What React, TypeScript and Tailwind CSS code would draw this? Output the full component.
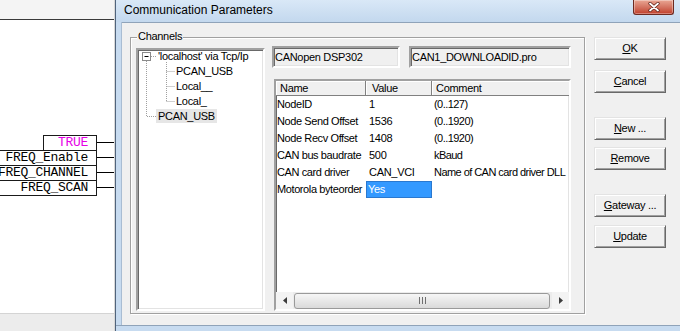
import React from "react";

const sunken =
  "border-2 border-t-[#a0a0a0] border-l-[#a0a0a0] border-b-white border-r-white shadow-[inset_1px_1px_0_#696969,inset_-1px_-1px_0_#e3e3e3]";
const raised =
  "border border-t-[#e3e3e3] border-l-[#e3e3e3] border-b-[#696969] border-r-[#696969] shadow-[inset_1px_1px_0_#fff,inset_-1px_-1px_0_#a0a0a0]";

const fbdRows = [
  { t: "TRUE", color: "text-[#e600e6]", w: "w-[54px]", last: false },
  { t: "FREQ_Enable", color: "text-black", w: "w-[100px]", last: false },
  { t: "FREQ_CHANNEL", color: "text-black", w: "w-[100px]", last: false },
  { t: "FREQ_SCAN", color: "text-black", w: "w-[100px]", last: true },
];

const props = [
  ["NodeID", "1", "(0..127)"],
  ["Node Send Offset", "1536", "(0..1920)"],
  ["Node Recv Offset", "1408", "(0..1920)"],
  ["CAN bus baudrate", "500", "kBaud"],
  ["CAN card driver", "CAN_VCI", "Name of CAN card driver DLL"],
  ["Motorola byteorder", "Yes", ""],
];

function LeftPane() {
  return (
    <div className="w-[115px] shrink-0 h-full flex flex-col bg-white border-r border-[#d8d8d8]">
      <div className="h-[20px] shrink-0 bg-[#f4f4f4] border-b border-[#3a3a3a]" />
      <div className="flex-1 pt-[115px] font-['Liberation_Mono',monospace] text-[13px]">
        {fbdRows.map((r) => (
          <div key={r.t} className="flex justify-end items-center h-[15px]">
            <div
              className={`${r.w} shrink-0 ${r.last ? "h-[16px] border-b" : "h-[15px]"} border-t border-l border-r border-[#1a1a1a] leading-[14px] text-right pr-[8px] whitespace-nowrap overflow-hidden ${r.color}`}
            >
              {r.t}
            </div>
            <div className="w-[17px] shrink-0 h-px bg-black self-start mt-[7px]" />
          </div>
        ))}
      </div>
      <div className="h-[18px] shrink-0 bg-[#ececec] border-t border-[#d4d4d4]" />
    </div>
  );
}

function CloseButton() {
  return (
    <div className="mr-[6px] w-[41px] h-[15px] rounded-b-[3px] border border-t-0 border-[#6d2a20] bg-linear-to-b from-[#e9a694] via-[#d47563] to-[#c03c28] shadow-[inset_0_0_0_1px_rgba(255,255,255,0.35)] flex items-center justify-center">
      <svg width="12" height="10" viewBox="0 0 12 10">
        <path d="M2 1.5 L10 8.5 M10 1.5 L2 8.5" stroke="#5a1d14" strokeWidth="3.2" strokeLinecap="round" />
        <path d="M2 1.5 L10 8.5 M10 1.5 L2 8.5" stroke="#ffffff" strokeWidth="1.8" strokeLinecap="round" />
      </svg>
    </div>
  );
}

function Tree() {
  return (
    <div className={`w-[129px] h-[263px] shrink-0 bg-white relative ${sunken}`}>
      <svg className="absolute left-0 top-0" width="125" height="80" viewBox="0 0 125 80">
        <g stroke="#a0a0a0" strokeWidth="1" strokeDasharray="1 1" fill="none">
          <path d="M13 6.5 H18" />
          <path d="M8.5 11 V66.5 H18" />
          <path d="M28.5 12 V51.5" />
          <path d="M28.5 21.5 H37" />
          <path d="M28.5 36.5 H37" />
          <path d="M28.5 51.5 H37" />
        </g>
        <rect x="4.5" y="2.5" width="8" height="8" fill="#fff" stroke="#8a8a8a" />
        <path d="M6.5 6.5 H10.5" stroke="#000" strokeWidth="1" />
      </svg>
      <div className="relative -mt-[1px] leading-[15px]">
        <div className="h-[15px] pl-[20px] whitespace-nowrap">'localhost' via Tcp/Ip</div>
        <div className="h-[15px] pl-[38px]">PCAN_USB</div>
        <div className="h-[15px] pl-[38px]">Local__</div>
        <div className="h-[15px] pl-[38px]">Local_</div>
        <div className="h-[15px] pl-[18px]">
          <span className="inline-block bg-[#e6e6e6] px-[2px] leading-[14px]">PCAN_USB</span>
        </div>
      </div>
    </div>
  );
}

function PropList() {
  return (
    <div className={`mt-[11px] ml-[2px] w-[297px] h-[232px] bg-white flex flex-col ${sunken}`}>
      <div className="h-[15px] shrink-0 flex bg-[#f0f0f0] leading-[14px]">
        <div className="w-[90px] border-r border-b border-[#808080] shadow-[inset_1px_1px_0_#fff] pl-[4px]">Name</div>
        <div className="w-[66px] border-r border-b border-[#808080] shadow-[inset_1px_1px_0_#fff] pl-[6px]">Value</div>
        <div className="flex-1 border-b border-[#808080] shadow-[inset_1px_1px_0_#fff] pl-[4px]">Comment</div>
      </div>
      <div className="flex-1">
        {props.map((p) => (
          <div key={p[0]} className="h-[17px] flex items-center whitespace-nowrap">
            <div className="w-[90px] pl-[1px] tracking-[-0.4px]">{p[0]}</div>
            {p[1] === "Yes" ? (
              <div className="w-[66px] h-[17px] bg-[#3399ff] border border-[#2a78cf] text-white pl-[1px] leading-[15px]">Yes</div>
            ) : (
              <div className="w-[66px] pl-[3px]">{p[1]}</div>
            )}
            <div className="flex-1 min-w-0 pl-[2px] tracking-[-0.55px]">{p[2]}</div>
          </div>
        ))}
      </div>
      <div className="h-[17px] shrink-0 flex bg-[#ececec]">
        <div className="w-[17px] flex items-center justify-center bg-[#f3f3f3]">
          <svg width="4" height="7" viewBox="0 0 4 7">
            <path d="M4 0 L0 3.5 L4 7 Z" fill="#3c3c3c" />
          </svg>
        </div>
        <div className="flex-1 flex items-center pl-[1px] pr-[1px]">
          <div className="w-[256px] h-[16px] rounded-[3px] border border-[#9a9a9a] bg-linear-to-b from-[#f6f6f6] to-[#dadada] flex items-center justify-center">
            <svg width="7" height="7" viewBox="0 0 7 7">
              <path d="M0.5 0 V7 M3.5 0 V7 M6.5 0 V7" stroke="#6f6f6f" strokeWidth="1" />
            </svg>
          </div>
        </div>
        <div className="w-[17px] flex items-center justify-center bg-[#f3f3f3]">
          <svg width="4" height="7" viewBox="0 0 4 7">
            <path d="M0 0 L4 3.5 L0 7 Z" fill="#3c3c3c" />
          </svg>
        </div>
      </div>
    </div>
  );
}

function Btn({ u, rest, mt }: { u: string; rest: string; mt: string }) {
  return (
    <div className={`${mt} w-[72px] h-[23px] bg-[#f0f0f0] flex items-center justify-center ${raised}`}>
      <span>
        <span className="underline underline-offset-[1px]">{u}</span>
        {rest}
      </span>
    </div>
  );
}

export default function App() {
  return (
    <div className="w-[680px] h-[331px] overflow-hidden flex bg-white font-['Liberation_Sans',Arial,sans-serif] text-[11px] tracking-[-0.3px] text-black">
      <LeftPane />
      <div className="flex-1 min-w-0 flex flex-col border-l border-[#50647c]">
        <div className="h-[22px] shrink-0 flex items-start bg-linear-to-b from-[#d9e8f7] to-[#c3d8ee]">
          <span className="pl-[8px] pt-[3px] text-[12px] leading-[14px] tracking-normal text-black whitespace-nowrap">
            Communication Parameters
          </span>
          <div className="flex-1" />
          <CloseButton />
        </div>
        <div className="flex-1 min-h-0 flex">
          <div className="w-[6px] shrink-0 bg-[#c7dbf0] border-r border-[#a9bdd3]" />
          <div className="flex-1 bg-[#f0f0f0] border-t border-[#8fa3b9] pl-[8px] pt-[14px] flex items-start">
            <div className="relative w-[455px] h-[277px] shrink-0 border border-[#a0a0a0] shadow-[1px_1px_0_#fff,inset_1px_1px_0_#fff] flex pl-[5px] pt-[10px]">
              <span className="absolute -top-[8px] left-[6px] px-[1px] bg-[#f0f0f0] leading-[13px]">Channels</span>
              <Tree />
              <div className="ml-[7px] -mt-[2px] w-[299px] flex flex-col">
                <div className="flex">
                  <div className={`w-[128px] h-[22px] bg-[#f0f0f0] pl-[1px] flex items-center whitespace-nowrap ${sunken}`}>
                    CANopen DSP302
                  </div>
                  <div className={`ml-[9px] w-[162px] h-[22px] bg-[#f0f0f0] pl-[1px] flex items-center whitespace-nowrap ${sunken}`}>
                    CAN1_DOWNLOADID.pro
                  </div>
                </div>
                <PropList />
              </div>
            </div>
            <div className="ml-[9px] flex flex-col">
              <Btn u="O" rest="K" mt="mt-0" />
              <Btn u="C" rest="ancel" mt="mt-[10px]" />
              <Btn u="N" rest="ew ..." mt="mt-[24px]" />
              <Btn u="R" rest="emove" mt="mt-[7px]" />
              <Btn u="G" rest="ateway ..." mt="mt-[24px]" />
              <Btn u="U" rest="pdate" mt="mt-[8px]" />
            </div>
          </div>
        </div>
        <div className="h-[6px] shrink-0 bg-[#c7dbf0] border-t border-[#8fa3b9]" />
      </div>
    </div>
  );
}
